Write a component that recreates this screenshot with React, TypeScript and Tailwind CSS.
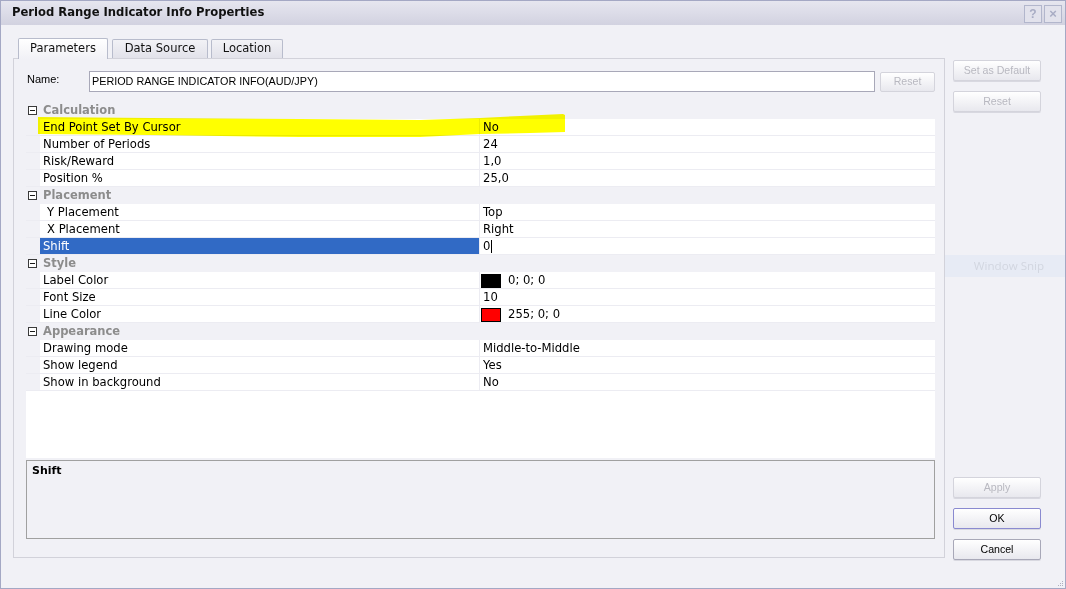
import React from "react";

type Row =
  | { kind: "cat"; label: string }
  | {
      kind: "prop";
      name: string;
      value: string;
      swatch?: string;
      selected?: boolean;
      indent?: boolean;
      cursor?: boolean;
    };

const rows: Row[] = [
  { kind: "cat", label: "Calculation" },
  { kind: "prop", name: "End Point Set By Cursor", value: "No" },
  { kind: "prop", name: "Number of Periods", value: "24" },
  { kind: "prop", name: "Risk/Reward", value: "1,0" },
  { kind: "prop", name: "Position %", value: "25,0" },
  { kind: "cat", label: "Placement" },
  { kind: "prop", name: "Y Placement", value: "Top", indent: true },
  { kind: "prop", name: "X Placement", value: "Right", indent: true },
  { kind: "prop", name: "Shift", value: "0", selected: true, cursor: true },
  { kind: "cat", label: "Style" },
  { kind: "prop", name: "Label Color", value: "0; 0; 0", swatch: "#000000" },
  { kind: "prop", name: "Font Size", value: "10" },
  { kind: "prop", name: "Line Color", value: "255; 0; 0", swatch: "#ff0000" },
  { kind: "cat", label: "Appearance" },
  { kind: "prop", name: "Drawing mode", value: "Middle-to-Middle" },
  { kind: "prop", name: "Show legend", value: "Yes" },
  { kind: "prop", name: "Show in background", value: "No" },
];

function Btn({
  label,
  disabled,
  primary,
  className = "",
}: {
  label: string;
  disabled?: boolean;
  primary?: boolean;
  className?: string;
}) {
  return (
    <div
      className={
        "h-[21px] w-[88px] flex items-center justify-center rounded-[2px] border bg-gradient-to-b from-[#ffffff] to-[#e8e8ee] text-[10.6px] font-['Liberation_Sans'] shadow-[0_1px_0_#d8d8e0] " +
        (primary ? "border-[#8a8ad0] " : disabled ? "border-[#d4d4dc] " : "border-[#a8a8b8] ") +
        (disabled ? "text-[#b8b8c0] " : "text-black ") +
        className
      }
    >
      {label}
    </div>
  );
}

function MinusBox() {
  return (
    <div className="w-[9px] h-[9px] border border-[#3a3a3a] bg-white flex items-center justify-center">
      <div className="w-[5px] h-[1px] bg-[#1a1a1a]" />
    </div>
  );
}

export default function App() {
  return (
    <div className="w-[1066px] h-[589px] bg-[#f1f1f6] border border-[#a4a8c4] flex flex-col overflow-hidden font-['DejaVu_Sans',sans-serif] relative">
      {/* Title bar */}
      <div className="h-[24px] shrink-0 flex items-center pl-[11px] pr-[3px] bg-gradient-to-b from-[#e6e6ef] via-[#dcdce8] to-[#d2d2e0]">
        <div className="text-[11.6px] font-bold text-[#111] flex-1">
          Period Range Indicator Info Properties
        </div>
        <div className="flex gap-[2px] pt-[1px]">
          <div className="w-[18px] h-[18px] border border-[#b2b6cc] bg-[#e2e2ec] flex items-center justify-center text-[12px] font-bold text-[#a8acc4] font-['Liberation_Sans']">
            ?
          </div>
          <div className="w-[18px] h-[18px] border border-[#b2b6cc] bg-[#e2e2ec] flex items-center justify-center text-[13px] font-bold text-[#a8acc4] font-['Liberation_Sans']">
            ×
          </div>
        </div>
      </div>

      {/* Body */}
      <div className="flex-1 flex">
        {/* Left: tab control */}
        <div className="w-[944px] shrink-0 pl-[12px] pt-[13px]">
          <div className="h-[20px] flex items-end pl-[5px]">
            <div className="relative z-10 h-[21px] -mb-px w-[90px] border border-b-0 border-[#b8bccc] bg-gradient-to-b from-[#ffffff] to-[#f1f1f6] flex items-center justify-center text-[11.5px] text-[#111] rounded-t-[2px]">
              Parameters
            </div>
            <div className="ml-[4px] h-[19px] w-[96px] border border-b-0 border-[#b8bccc] bg-gradient-to-b from-[#f2f2f6] to-[#e2e2ea] flex items-center justify-center text-[11.5px] text-[#111] rounded-t-[2px]">
              Data Source
            </div>
            <div className="ml-[3px] h-[19px] w-[72px] border border-b-0 border-[#b8bccc] bg-gradient-to-b from-[#f2f2f6] to-[#e2e2ea] flex items-center justify-center text-[11.5px] text-[#111] rounded-t-[2px]">
              Location
            </div>
          </div>
          <div className="h-[500px] w-[932px] border border-[#d2d2da] pt-[12px] pl-[12px] pr-[9px] pb-[18px] flex flex-col">
            {/* Name row */}
            <div className="h-[21px] flex items-center">
              <div className="w-[63px] pl-[1px] text-[11px] font-['Liberation_Sans'] text-black -mt-[4px]">
                Name:
              </div>
              <div className="h-[21px] w-[786px] border border-[#a8a8b8] bg-white flex items-center pl-[2px] text-[10.8px] font-['Liberation_Sans'] text-black">
                PERIOD RANGE INDICATOR INFO(AUD/JPY)
              </div>
              <div className="ml-[5px] h-[20px] w-[55px] flex items-center justify-center rounded-[2px] border border-[#d4d4dc] bg-gradient-to-b from-[#ffffff] to-[#e8e8ee] text-[10.6px] font-['Liberation_Sans'] text-[#b8b8c0]">
                Reset
              </div>
            </div>

            {/* Property grid */}
            <div className="mt-[10px] h-[356px] bg-white relative flex flex-col">
              {rows.map((r, i) =>
                r.kind === "cat" ? (
                  <div
                    key={i}
                    className="h-[17px] shrink-0 bg-[#f1f1f6] flex items-center"
                  >
                    <div className="w-[17px] pl-[2px] flex items-center">
                      <MinusBox />
                    </div>
                    <div className="text-[11.5px] font-bold text-[#8c8c8c] leading-none">
                      {r.label}
                    </div>
                  </div>
                ) : (
                  <div
                    key={i}
                    className="h-[17px] shrink-0 flex border-b border-[#ececf2] bg-[#f1f1f6]"
                  >
                    <div className="w-[14px] shrink-0" />
                    <div
                      className={
                        "w-[439px] shrink-0 flex items-center pt-[1px] text-[11.6px] leading-none " +
                        (r.indent ? "pl-[7px] " : "pl-[3px] ") +
                        (r.selected ? "bg-[#316ac5] text-white" : "bg-white text-black")
                      }
                    >
                      {r.name}
                    </div>
                    <div className="w-[1px] shrink-0 bg-[#ececf2]" />
                    <div className="flex-1 bg-white flex items-center pt-[1px] pl-[1px] text-[11.6px] leading-none text-black">
                      {r.swatch ? (
                        <>
                          <div
                            className="w-[20px] h-[14px] border border-black"
                            style={{ backgroundColor: r.swatch }}
                          />
                          <span className="ml-[7px]">{r.value}</span>
                        </>
                      ) : (
                        <span className="pl-[2px] flex items-center">
                          {r.value}
                          {r.cursor && (
                            <span className="ml-[1px] w-[1px] h-[13px] bg-black inline-block" />
                          )}
                        </span>
                      )}
                    </div>
                  </div>
                )
              )}
              {/* Yellow highlighter stroke */}
              <svg
                className="absolute left-[12px] top-[12px] pointer-events-none mix-blend-multiply"
                width="530"
                height="26"
                viewBox="0 0 530 26"
              >
                <polygon
                  points="0,3 112,4 262,5 382,6 442,4 482,2 525,0 527,1 527,18 492,19 442,20 382,23 262,23 112,21 0,20"
                  fill="#ffff00"
                />
              </svg>
            </div>

            {/* Description box */}
            <div className="mt-[2px] h-[79px] border border-[#a0a0a0] bg-[#f1f1f6] pl-[5px] pt-[2px]">
              <div className="text-[11px] font-bold text-black">Shift</div>
            </div>
          </div>
        </div>

        {/* Right column */}
        <div className="flex-1 flex flex-col pl-[8px] pb-[28px] relative">
          <Btn label="Set as Default" disabled className="mt-[35px]" />
          <Btn label="Reset" disabled className="mt-[10px]" />
          <div className="-ml-[8px] pl-[8px] mt-[143px] h-[22px] bg-[#e7ebf5] flex items-center justify-center text-[11.6px] text-[#d2d6e0] font-['Open_Sans']">
            Window Snip
          </div>
          <div className="flex-1" />
          <Btn label="Apply" disabled />
          <Btn label="OK" primary className="mt-[10px]" />
          <Btn label="Cancel" className="mt-[10px]" />
        </div>
      </div>

      {/* Resize grip */}
      <svg
        className="absolute right-[1px] bottom-[1px]"
        width="8"
        height="8"
        viewBox="0 0 8 8"
      >
        <rect x="6" y="2" width="1" height="1" fill="#b0b0c0" />
        <rect x="4" y="4" width="1" height="1" fill="#b0b0c0" />
        <rect x="6" y="4" width="1" height="1" fill="#b0b0c0" />
        <rect x="2" y="6" width="1" height="1" fill="#b0b0c0" />
        <rect x="4" y="6" width="1" height="1" fill="#b0b0c0" />
        <rect x="6" y="6" width="1" height="1" fill="#b0b0c0" />
      </svg>
    </div>
  );
}
